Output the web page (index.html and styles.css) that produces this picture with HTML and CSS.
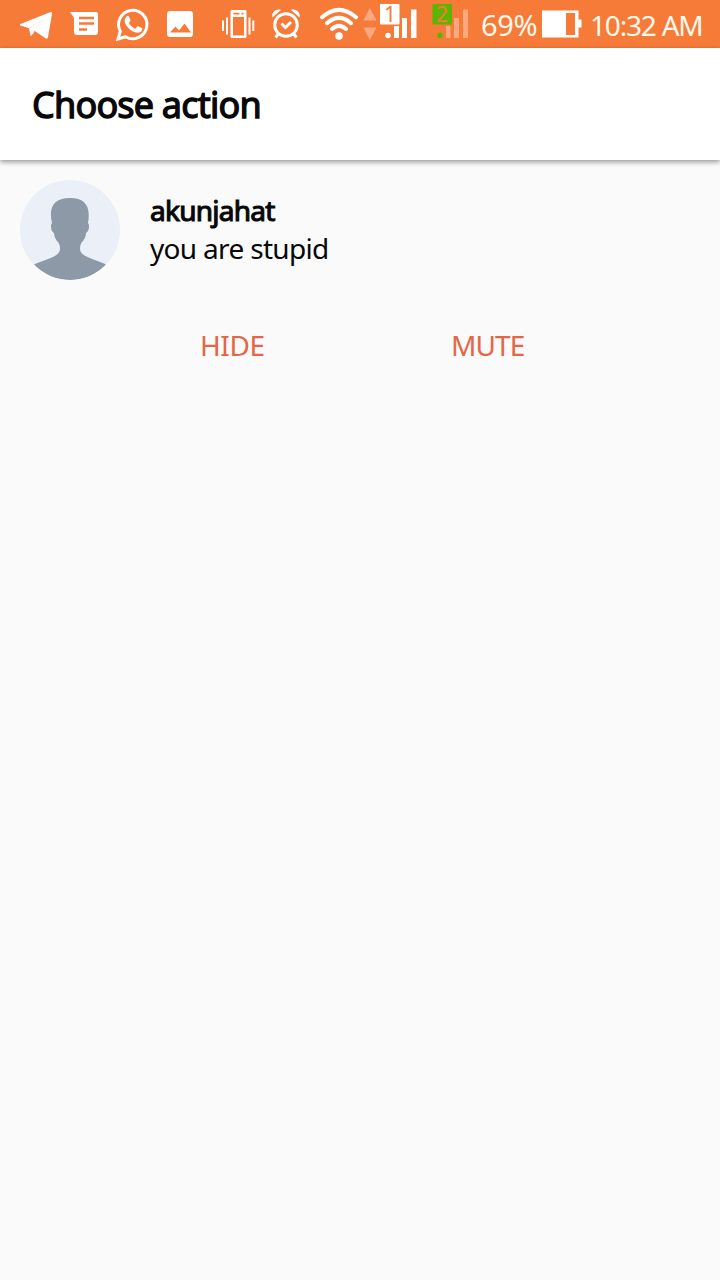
FILE: index.html
```html
<!DOCTYPE html>
<html lang="en">
<head>
<meta charset="utf-8">
<title>Choose action</title>
<link rel="stylesheet" href="styles.css">
</head>
<body>
<div class="status-bar">
  <div class="notifications">
    <svg class="icon" viewBox="12 0 48 48"><path d="M20.500 25.400C19.500 24.800 20 24.200 21 23.800L50 12.200c1.600-.6 2.300.1 2 1.700l-4 23c-.3 1.800-1.400 2.200-2.800 1.200L34 30.500 43 19.500 29 28.300z"/><path d="M29 28.300 44 18.500 35 29.500 34 32.500 31.500 35.500q-1 .8-1.100-.5z"/></svg>
    <svg class="icon" viewBox="60 0 48 48"><path d="M70 12h26q2 0 2 2v18q0 3-3 3H77q-3 0-3-3V18z"/><path class="cut" d="M79 18h15M79 23.500h15M79 29.500h8"/></svg>
    <svg class="icon" viewBox="108 0 48 48"><path class="line" d="M118 39 120.300 31.200A14.200 14.200 0 1 1 125.600 36.700Z"/><path d="M126.500 16.500c1-.9 2-.8 2.500.1l1.400 3.100c.3.9-.2 1.600-1.500 3 1.300 2.800 3.400 4.800 6.300 6l2-2c.5-.6.9-.5 1.600-.2l3 1.500c1.500.8-.3 3.700-1.800 4.300-4 1.600-8.600-1-11.800-4.500-2.900-3.100-5.300-7.500-1.700-11.300z"/></svg>
    <svg class="icon" viewBox="156 0 48 48"><rect x="167" y="11" width="26" height="26" rx="3"/><path class="notch" d="m170 32.500 5.500-6 3.500 4 5.500-7L191 32.500z"/></svg>
  </div>
  <svg class="icon" viewBox="214 0 48 48"><path fill-rule="evenodd" d="M232 10h13q1.500 0 1.500 1.500v25q0 1.500-1.500 1.500h-13q-1.500 0-1.500-1.500v-25q0-1.500 1.500-1.500zM233 17V35.500h11V17zM233.500 12.700v1.800h6v-1.800zM241.500 12.700v1.800h2v-1.800z"/><path class="thin" d="M223 20.500V31M227 17.500V34.500M249.500 17.500V34.500M253.300 20.500V31"/></svg>
  <svg class="icon" viewBox="262 0 48 48"><circle class="line" cx="286" cy="25" r="11.300"/><path class="line" d="m279 33-3.500 4.500M293 33l3.500 4.500M281.500 23.500l4 4 5.500-5.500"/><path d="M272.500 17.500C271 12.500 276 8 281 10zM299.500 17.500C301 12.500 296 8 291 10z"/></svg>
  <svg class="wifi" viewBox="315 0 48 48"><path class="wave" d="M322 17.300Q339 2.300 356 17.300M327 23.200Q339 12.700 351 23.200M332 29Q339 22.700 346 29"/><circle cx="339" cy="36" r="3.800"/></svg>
  <div class="signals">
    <svg class="signal-bars" viewBox="363 0 112 48">
      <path class="faded" d="M369.800 8 376 19.500q.3 1-.7 1H364.500q-1 0-.6-1zM369.800 40 376 28.500q.3-1-.7-1H364.500q-1 0-.6 1z"/>
      <rect x="380" y="4" width="19.500" height="20.500" rx="1"/>
      <circle cx="388" cy="35.500" r="2.800"/>
      <path d="M394 26h5v12h-5zM402 18h5v20h-5zM411 9.500h5.500v28.500H411z"/>
      <rect class="sim-two" x="432.500" y="4" width="19.500" height="20.500" rx="1"/>
      <circle class="sim-two" cx="440" cy="35.500" r="2.800"/>
      <path class="faded" d="M446 26h4.500v12H446zM454 18h5v20h-5zM463 9.500h5v28.500h-5z"/>
    </svg>
    <span class="sim sim-label-one">1</span><span class="sim sim-label-two">2</span>
  </div>
  <span class="percent">69%</span>
  <svg class="battery" viewBox="542 0 40 48"><path fill-rule="evenodd" d="M542 10.500h36.500v9h3v8h-3v10H542zM566 13v22h9V13z"/></svg>
  <span class="clock">10:32 AM</span>
</div>
<header class="toolbar"><h1 class="title">Choose action</h1></header>
<main class="content">
  <div class="comment">
    <svg class="avatar" viewBox="0 0 100 100"><path d="M14 84.500C26 79 40 77 40 69c0-4-1-6-3-8-2-3-3-5-3-8-3-1-4-8-2-10C28 26 35 18 50 18s21 8 18 25C70 45 69 52 66 53c0 3-1 5-3 8-2 2-3 4-3 8 0 8 15 10 26 15.500Q71 100 50 100T14 84.500z"/></svg>
    <div class="message"><div class="author">akunjahat</div><div class="body">you are stupid</div></div>
  </div>
  <div class="actions"><span class="action hide">HIDE</span><span class="action mute">MUTE</span></div>
</main>
</body>
</html>
```
FILE: styles.css
```css
body {
  margin: 0;
  min-height: 1280px;
  background: #fafafa;
  color: #080808;
  font-family: "Noto Sans", sans-serif;
}
.status-bar {
  display: flex;
  height: 48px;
  padding-left: 12px;
  background: #f67b38;
  color: #fff8ed;
  fill: #fff;
  white-space: nowrap;
}
svg { display: block; flex: none; }
.notifications { display: flex; margin-right: 10px; }
.icon, .wifi { width: 48px; height: 48px; }
.wifi { margin-left: 5px; }
.signals { position: relative; flex: none; width: 112px; height: 48px; }
.signal-bars { width: 112px; height: 48px; }
.line, .cut, .wave, .thin { fill: none; stroke: #fff; stroke-width: 3; }
.cut { stroke: #f67b38; stroke-width: 2.6; }
.thin { stroke-width: 2; }
.wave { stroke-width: 4; stroke-linecap: round; }
.notch { fill: #f67b38; }
.faded { fill: #ffa77d; }
.sim-two { fill: #5cb500; }
.sim { position: absolute; top: 0; width: 20px; color: #f67b38; font-size: 21px; line-height: 29px; text-align: center; }
.sim-label-one { left: 17px; }
.sim-label-two { left: 69px; }
.percent, .clock { font-size: 29px; line-height: 50px; }
.percent { width: 61px; margin-left: 6px; letter-spacing: -0.4px; }
.battery { width: 40px; height: 48px; }
.clock { margin-left: 8px; font-size: 28px; letter-spacing: -1.2px; }
.toolbar {
  display: flex;
  align-items: center;
  height: 112px;
  padding-left: 32px;
  background: #fff;
  box-shadow: 0 2px 5px rgb(0 0 0 / 40%);
}
.title { margin: 2px 0 0; font-size: 36px; font-weight: 400; line-height: 50px; letter-spacing: -0.8px; -webkit-text-stroke: 1.3px; }
.content { padding: 20px; }
.comment { display: flex; gap: 30px; }
.avatar { width: 100px; height: 100px; border-radius: 50%; background: #ebeff7; fill: #8e99a8; }
.message { padding-top: 11px; font-size: 28px; line-height: 38px; }
.author { letter-spacing: -0.75px; -webkit-text-stroke: 1.1px; }
.body { letter-spacing: -0.68px; }
.actions { display: flex; margin-top: 45px; padding-left: 180px; color: #e46646; font-size: 28px; line-height: 40px; letter-spacing: -0.4px; }
.hide { width: 251px; }
.mute { letter-spacing: -0.9px; }
```
